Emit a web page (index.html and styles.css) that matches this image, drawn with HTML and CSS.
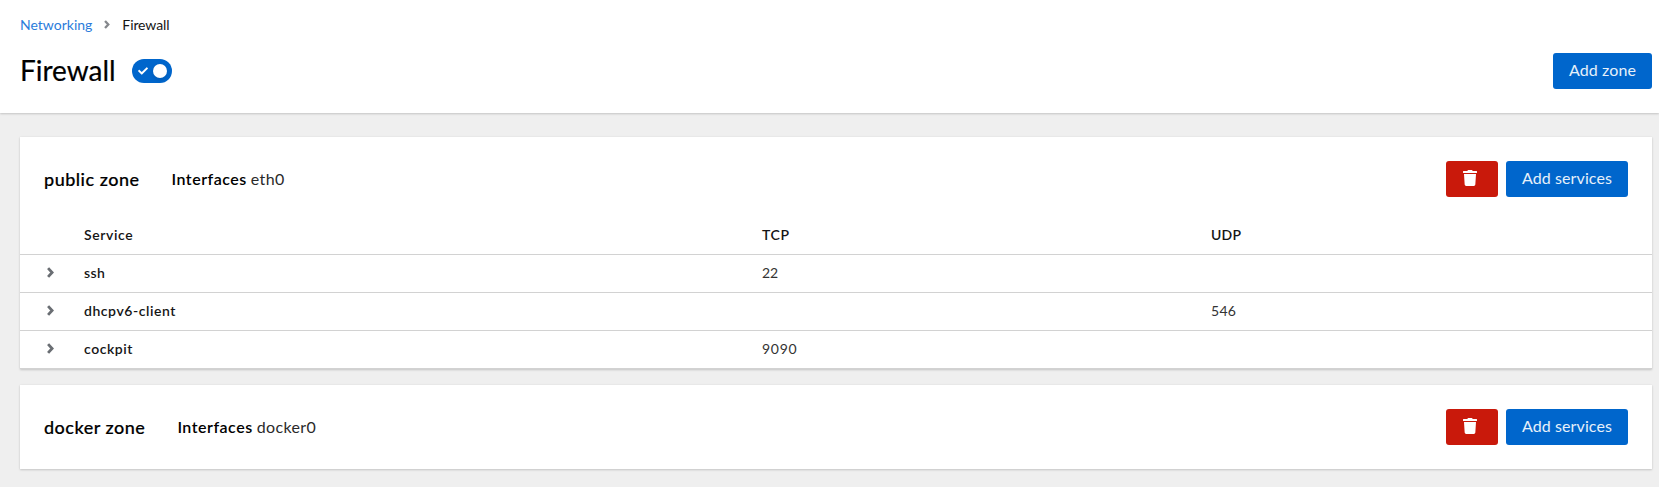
FILE: index.html
```html
<!DOCTYPE html>
<html lang="en">
<head>
<meta charset="utf-8">
<title>Firewall</title>
<link rel="stylesheet" href="styles.css">
</head>
<body>
<svg class="defs" aria-hidden="true">
  <symbol id="angle" viewBox="0 0 7 11"><path fill="none" stroke="currentColor" stroke-width="2.800" d="M1.100 1.100L5.100 5.500L1.100 9.900"/></symbol>
  <symbol id="trash" viewBox="0 0 448 512"><path fill="currentColor" d="M432 32H312l-9.400-18.700A24 24 0 0 0 281.100 0H166.800a23.720 23.720 0 0 0-21.400 13.300L136 32H16A16 16 0 0 0 0 48v32a16 16 0 0 0 16 16h416a16 16 0 0 0 16-16V48a16 16 0 0 0-16-16zM53.200 467a48 48 0 0 0 47.900 45h245.800a48 48 0 0 0 47.900-45L416 128H32z"/></symbol>
</svg>
<header class="page-header">
  <nav class="breadcrumb">
    <a class="crumb-link" href="#">Networking</a>
    <svg class="crumb-sep"><use href="#angle"/></svg>
    <span class="crumb-current">Firewall</span>
  </nav>
  <div class="title-row">
    <h1 class="title">Firewall</h1>
    <span class="switch" role="switch" aria-checked="true">
      <svg class="check" viewBox="0 0 512 512"><path fill="#fff" d="M173.900 439.400l-166.400-166.400c-10-10-10-26.200 0-36.200l36.200-36.200c10-10 26.200-10 36.200 0L192 312.700 432.100 72.600c10-10 26.200-10 36.200 0l36.200 36.200c10 10 10 26.200 0 36.200l-294.400 294.400c-10 10-26.200 10-36.200 0z"/></svg>
      <span class="knob"></span>
    </span>
    <button class="btn primary push">Add zone</button>
  </div>
</header>
<main class="zones">
  <section class="card">
    <div class="card-head">
      <h2 class="zone-name">public zone</h2>
      <p class="interfaces"><strong class="label">Interfaces</strong> <span class="iface">eth0</span></p>
      <div class="actions push">
        <button class="btn danger" aria-label="Delete"><svg class="trash"><use href="#trash"/></svg></button>
        <button class="btn primary">Add services</button>
      </div>
    </div>
    <div class="table">
      <div class="row head"><span></span><span class="service">Service</span><span class="tcp">TCP</span><span class="udp">UDP</span></div>
      <div class="row"><svg class="toggle"><use href="#angle"/></svg><b class="name ssh">ssh</b><span class="num two">22</span><span></span></div>
      <div class="row"><svg class="toggle"><use href="#angle"/></svg><b class="name">dhcpv6-client</b><span></span><span class="num">546</span></div>
      <div class="row"><svg class="toggle"><use href="#angle"/></svg><b class="name">cockpit</b><span class="num wide">9090</span><span></span></div>
    </div>
  </section>
  <section class="card">
    <div class="card-head">
      <h2 class="zone-name">docker zone</h2>
      <p class="interfaces"><strong class="label">Interfaces</strong> <span class="iface">docker0</span></p>
      <div class="actions push">
        <button class="btn danger" aria-label="Delete"><svg class="trash"><use href="#trash"/></svg></button>
        <button class="btn primary">Add services</button>
      </div>
    </div>
  </section>
</main>
</body>
</html>
```
FILE: styles.css
```css
* { box-sizing: border-box; }
body {
  margin: 0;
  min-height: 487px;
  background: #efefef;
  color: #151515;
  font: 16px/24px Lato, "Liberation Sans", sans-serif;
}
h1, h2, p { margin: 0; }
.defs { display: none; }
.page-header {
  height: 113px;
  padding: 14px 7px 0 20px;
  background: #fff;
  box-shadow: 0 1px 2px 0 rgba(3, 3, 3, .16), 0 0 2px 0 rgba(3, 3, 3, .06);
}
.breadcrumb { display: flex; align-items: center; height: 21px; font-size: 14px; line-height: 21px; }
.crumb-link { color: #2b7cdb; text-decoration: none; }
.crumb-sep { width: 6px; height: 9px; margin: 0 12px; color: #85888c; }
.crumb-current { letter-spacing: -.1px; }
.title-row { display: flex; align-items: center; height: 36px; margin-top: 18px; }
.title { color: #000; font-size: 28px; line-height: 36px; font-weight: 400; width: 112px; padding-bottom: 2px; -webkit-text-stroke: .2px #000; }
.switch {
  display: flex;
  align-items: center;
  justify-content: space-between;
  width: 40px;
  height: 24px;
  padding: 0 5px 0 6px;
  border-radius: 12px;
  background: #06c;
}
.check { width: 10px; height: 10px; }
.knob { width: 14px; height: 14px; border-radius: 50%; background: #fff; box-shadow: 0 2px 4px rgba(3, 3, 3, .12); }
.push { margin-left: auto; }
.btn {
  height: 36px;
  padding: 0 16px 2px;
  border: 0;
  border-radius: 3px;
  color: #e6f0fa;
  font: inherit;
  letter-spacing: .1px;
}
.primary { background: #06c; }
.danger { width: 52px; padding: 0 17px 2px; background: #c9190b; color: #fff; }
.trash { display: block; width: 14px; height: 16px; }
.zones { display: flex; flex-direction: column; gap: 16px; padding: 24px 7px 0 20px; }
.card { background: #fff; box-shadow: 0 1px 2px 0 rgba(3, 3, 3, .16), 0 0 2px 0 rgba(3, 3, 3, .06); }
.card-head { display: flex; align-items: center; padding: 24px; gap: 32px; }
.table { margin-top: -4px; font-size: 14px; line-height: 21px; }
.zone-name { color: #000; font-size: 18px; line-height: 24px; font-weight: 500; letter-spacing: .5px; -webkit-text-stroke: .2px #000; }
.interfaces { white-space: nowrap; }
.label { color: #000; font-weight: 600; letter-spacing: .5px; }
.iface { color: #2a2a2a; letter-spacing: .35px; }
.actions { display: flex; gap: 8px; }
.row {
  display: grid;
  grid-template-columns: 40px 678px 449px 1fr;
  align-items: center;
  height: 38px;
  padding: 0 0 2px 24px;
  border-bottom: 1px solid #d2d2d2;
}
.head { font-weight: 600; }
.service { letter-spacing: .6px; }
.tcp { letter-spacing: .6px; }
.udp { letter-spacing: .2px; }
.name { font-weight: 600; letter-spacing: .55px; }
.ssh { letter-spacing: .4px; }
.num { color: #333; letter-spacing: .3px; }
.two { letter-spacing: 0; }
.wide { letter-spacing: .7px; }
.toggle { width: 7px; height: 11px; margin-left: 3px; color: #6a6e73; }
```
